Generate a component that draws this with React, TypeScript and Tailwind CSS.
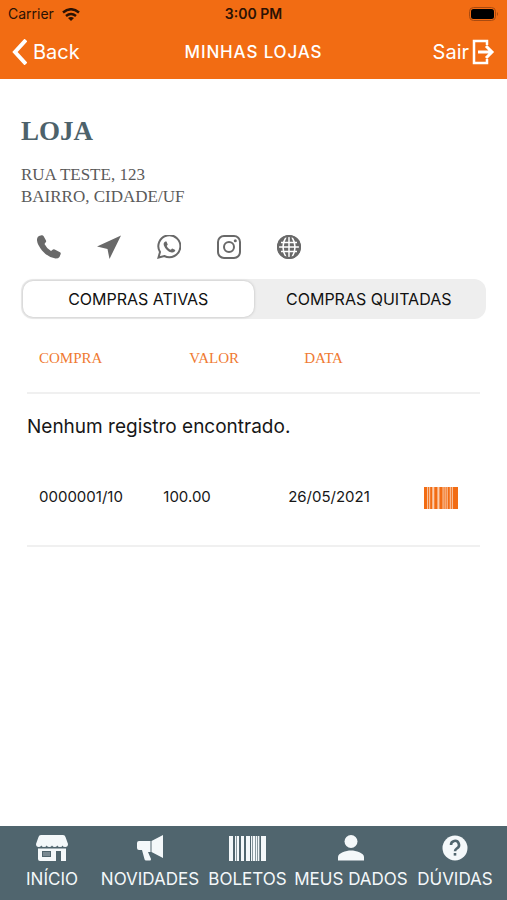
import { useState } from 'react';
import type { ReactNode } from 'react';

const orangeBars: [number, number][] = [
  [0, 3], [4, 1], [6, 2], [10, 3], [15, 3], [19, 1], [21, 1], [23, 2], [26, 1], [28, 5],
];

function Barcode({ className }: { className: string }) {
  return (
    <svg viewBox="0 0 33 21" preserveAspectRatio="none" className={className} fill="currentColor" aria-hidden="true">
      <rect width="33" height="21" opacity="0.35" />
      {orangeBars.map(([x, w]) => (
        <rect key={x} x={x} width={w} height="21" />
      ))}
    </svg>
  );
}

function TabBarcode() {
  return (
    <svg viewBox="0 0 37 25" className="h-[25px] w-[37px]" fill="currentColor" aria-hidden="true">
      <path opacity="0.35" d="M6 0h4v25H6zM22 0h9v25h-9z" />
      <path d="M0 0h4v25H0zM6 0h1v25H6zM8 0h2v25H8zM12 0h3v25h-3zM17 0h4v25h-4zM22 0h1v25h-1zM24 0h2v25h-2zM27 0h1v25h-1zM29 0h1v25h-1zM32 0h5v25h-5z" />
    </svg>
  );
}

function StoreIcon() {
  return (
    <svg viewBox="0 0 32 26" className="h-[26px] w-8" fill="currentColor" aria-hidden="true">
      <path d="M5 0h22q2 0 2.500 2L32 9q0 3-2.700 3-2.600 0-2.600-1.500Q26 12 24 12t-2.700-1.500Q20.500 12 18.700 12T16 10.500Q15.200 12 13.300 12t-2.600-1.500Q10 12 8 12t-2.700-1.500Q4.500 12 2.700 12 0 12 0 9l2.500-7Q3 0 5 0z" />
      <path fillRule="evenodd" d="M2 13.500h28V26h-5V16h-5v10H4q-2 0-2-2zM6 16v6h9v-6z" />
      <path d="M7 17h7v4H7z" opacity="0.25" />
    </svg>
  );
}

function MegaphoneIcon() {
  return (
    <svg viewBox="0 0 26 26" className="h-[26px] w-[26px]" fill="currentColor" aria-hidden="true">
      <path d="M14.500 6 26 0v23l-11.500-6zM2 6h11.500v11H11l3 7q0 1.500-1 1.500H9q-1 0-1.400-1L5 15H2q-2 0-2-2V8q0-2 2-2z" />
    </svg>
  );
}

function UserIcon() {
  return (
    <svg viewBox="0 0 26 26" className="h-[26px] w-[26px]" fill="currentColor" aria-hidden="true">
      <circle cx="13" cy="6.500" r="6.500" />
      <path d="M0 25.500V22c0-4 8-6.500 13-6.500S26 18 26 22v3.500z" />
    </svg>
  );
}

function HelpIcon() {
  return (
    <svg viewBox="0 0 26 26" className="h-[26px] w-[26px]" aria-hidden="true">
      <circle cx="13" cy="13" r="12.500" fill="currentColor" />
      <path d="M9 10a4 4 0 1 1 6 3.300c-1.400 1-2 1.500-2 3" fill="none" stroke="#50656e" strokeWidth="2.600" />
      <path d="M11.700 18h2.600v2.600h-2.600z" fill="#50656e" />
    </svg>
  );
}

const contacts: { label: string; icon: ReactNode }[] = [
  {
    label: 'Telefone',
    icon: (
      <path
        fill="currentColor"
        d="M2 1 4.500.300q1.300-.3 2 .8L9 5.500q.5 1-.3 1.800L7.500 9q2.200 4.500 6.500 7l2-1.500q.8-.6 1.700-.1l5.300 2.800q1 .6.700 1.700L22.500 22q-1 1.500-4 1.500Q11 22.500 5 15.500-.500 8.500 0 4 .500 1.500 2 1z"
      />
    ),
  },
  { label: 'Localização', icon: <path fill="currentColor" d="M24 .500 0 11.500l10.500 2.500L12.500 24z" /> },
  {
    label: 'WhatsApp',
    icon: (
      <>
        <path fill="none" stroke="currentColor" strokeWidth="2" d="M1.500 22.500 3 17A11 11 0 1 1 7.300 21z" />
        <path
          fill="currentColor"
          d="M8.300 6.500c-1.500.6-2 2.300-1.400 4 1.400 3.700 4.100 6.300 7.800 7 2 .3 3.500-.8 3.600-2.500l-3-1.600c-.8.4-1 1.200-1.500 1.300-1.800-.5-3.400-2-4-3.700.1-.6.900-.9.900-1.500L9.500 6.600z"
        />
      </>
    ),
  },
  {
    label: 'Instagram',
    icon: (
      <>
        <rect x="1" y="1" width="22" height="22" rx="6" fill="none" stroke="currentColor" strokeWidth="2" />
        <circle cx="12" cy="12" r="5" fill="none" stroke="currentColor" strokeWidth="2" />
        <circle cx="18.300" cy="5.700" r="1.500" fill="currentColor" />
      </>
    ),
  },
  {
    label: 'Site',
    icon: (
      <>
        <circle cx="12" cy="12" r="12" fill="currentColor" />
        <path
          fill="none"
          stroke="white"
          strokeWidth="1.500"
          d="M12 2v20M2 12h20M4 7.500h16M4 16.500h16M9 2q-6 10 0 20M15 2q6 10 0 20"
        />
        <circle cx="12" cy="12" r="11" fill="none" stroke="currentColor" strokeWidth="2" />
      </>
    ),
  },
];

const tabs = [
  { label: 'INÍCIO', icon: <StoreIcon /> },
  { label: 'NOVIDADES', icon: <MegaphoneIcon /> },
  { label: 'BOLETOS', icon: <TabBarcode /> },
  { label: 'MEUS DADOS', icon: <UserIcon /> },
  { label: 'DÚVIDAS', icon: <HelpIcon /> },
];

const segments = ['COMPRAS ATIVAS', 'COMPRAS QUITADAS'];

function StatusBar() {
  return (
    <div className="grid h-7 grid-cols-3 items-center px-2 text-sm leading-5 text-[#2b1204]">
      <div className="flex items-center gap-2">
        <span>Carrier</span>
        <svg viewBox="0 0 18 13" className="h-[13px] w-[18px]" fill="none" stroke="currentColor" strokeWidth="2.500" aria-hidden="true">
          <path d="M1 4.500q8-6.500 16 0M4 8q5-4 10 0" />
          <path d="M9 13 6 10q3-2 6 0z" fill="currentColor" stroke="none" />
        </svg>
      </div>
      <span className="text-center font-semibold">3:00 PM</span>
      <svg viewBox="0 0 30 14" className="h-3.5 w-[30px] justify-self-end" aria-hidden="true">
        <rect x=".5" y=".5" width="26" height="13" rx="4" fill="none" stroke="#a84a10" />
        <rect x="2" y="2" width="23" height="10" rx="2.500" fill="black" />
        <path d="M28 5q2 2 0 4z" fill="#a84a10" />
      </svg>
    </div>
  );
}

export default function App() {
  const [active, setActive] = useState(0);

  return (
    <div className="flex min-h-screen flex-col bg-white font-['Inter',sans-serif] text-[#171717]">
      <header className="bg-[#f26c13]">
        <StatusBar />
        <div className="grid h-[51px] grid-cols-[1fr_auto_1fr] items-center px-3 pb-1 text-white">
          <button type="button" className="flex items-center gap-1.5 justify-self-start text-xl leading-6">
            <svg viewBox="0 0 15 26" className="h-[26px] w-[15px]" fill="none" stroke="currentColor" strokeWidth="4" aria-hidden="true">
              <path d="M14 1 3 13l11 12" />
            </svg>
            <span>Back</span>
          </button>
          <h1 className="text-[17px] leading-6 font-medium tracking-wider">MINHAS LOJAS</h1>
          <button type="button" className="flex items-center gap-0.5 justify-self-end text-xl leading-6">
            <span>Sair</span>
            <svg viewBox="0 0 24 26" className="h-[26px] w-6" fill="none" stroke="currentColor" aria-hidden="true">
              <path strokeWidth="2.500" d="M16 6V2H3v22h13v-4" />
              <path strokeWidth="3" d="M7 13h14M15 7l6 6-6 6" />
            </svg>
          </button>
        </div>
      </header>

      <main className="flex-1 px-[21px] pt-9">
        <section className="font-['Liberation_Serif',serif]">
          <h2 className="text-[27px] leading-8 font-bold text-[#4d626b]">LOJA</h2>
          <address className="mt-[17px] text-[17px] leading-[22px] text-[#5a5a5a] not-italic">
            RUA TESTE, 123
            <br />
            BAIRRO, CIDADE/UF
          </address>
        </section>

        <div className="mt-[27px] flex gap-9 px-4 text-[#696969]">
          {contacts.map(({ label, icon }) => (
            <button key={label} type="button" aria-label={label} className="h-6 w-6">
              <svg viewBox="0 0 24 24" className="h-6 w-6" aria-hidden="true">
                {icon}
              </svg>
            </button>
          ))}
        </div>

        <div className="mt-5 grid h-10 grid-cols-2 rounded-xl bg-[#eeeeee] p-0.5 text-base leading-5">
          {segments.map((label, i) => (
            <button
              key={label}
              type="button"
              aria-pressed={active === i}
              onClick={() => setActive(i)}
              className={
                active === i
                  ? 'rounded-[10px] bg-white text-[#111] shadow-[0_0_3px_#b8b8b8]'
                  : 'rounded-[10px] text-[#111]'
              }
            >
              {label}
            </button>
          ))}
        </div>

        <div className="px-1.5">
          <table className="w-full table-fixed text-left">
            <colgroup>
              <col className="w-[27%]" />
              <col className="w-[28%]" />
              <col className="w-[28%]" />
              <col />
            </colgroup>
            <thead className="font-['Liberation_Serif',serif] text-[15px] leading-5 text-[#ef7a32]">
              <tr className="h-[74px] border-b-2 border-[#f0f0f0]">
                <th scope="col" className="pt-1 pl-3 font-normal">COMPRA</th>
                <th scope="col" className="pt-1 pl-10 font-normal">VALOR</th>
                <th scope="col" className="pt-1 pl-7 font-normal">DATA</th>
                <td />
              </tr>
            </thead>
            <tbody>
              <tr className="h-[66px]">
                <td colSpan={4} className="text-[19px] leading-6">Nenhum registro encontrado.</td>
              </tr>
              <tr className="h-[87px] border-b-2 border-[#f0f0f0] align-top text-[15px] leading-5">
                <td className="pt-7 pl-3">0000001/10</td>
                <td className="pt-7 pl-3.5">100.00</td>
                <td className="pt-7 pl-3">26/05/2021</td>
                <td className="pt-7 pr-[22px]">
                  <button type="button" aria-label="Ver boleto" className="ml-auto block text-[#f26c13]">
                    <Barcode className="h-[22px] w-[34px]" />
                  </button>
                </td>
              </tr>
            </tbody>
          </table>
        </div>
      </main>

      <nav className="grid h-[74px] grid-cols-[94fr_102fr_93fr_114fr_94fr] bg-[#50656e] px-[5px] pt-[9px] text-[17px] leading-6 text-[#f4f8fa]">
        {tabs.map(({ label, icon }) => (
          <a key={label} href="#" className="flex flex-col items-center gap-1.5 whitespace-nowrap">
            <span className="flex h-[26px] items-center">{icon}</span>
            <span>{label}</span>
          </a>
        ))}
      </nav>
    </div>
  );
}
